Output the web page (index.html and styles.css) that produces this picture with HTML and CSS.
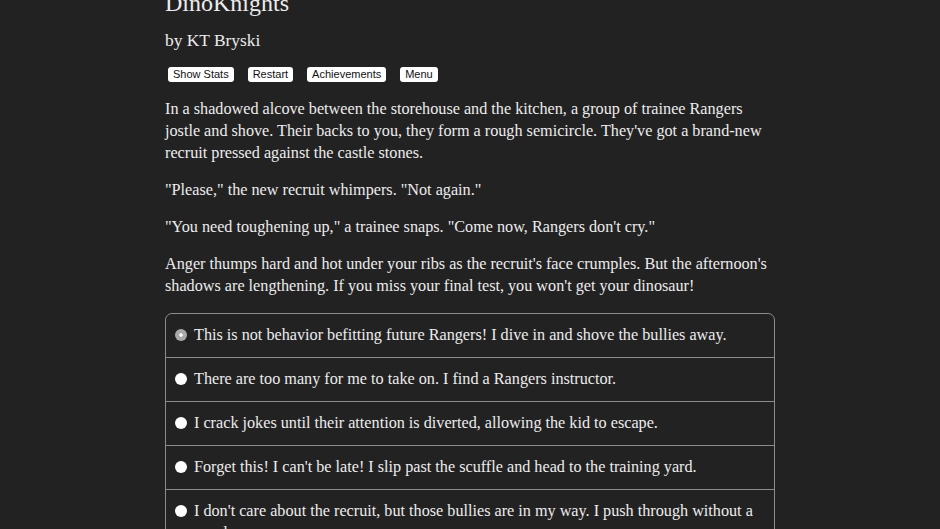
FILE: index.html
```html
<!DOCTYPE html>
<html>
<head>
<meta charset="utf-8">
<link rel="stylesheet" href="styles.css">
</head>
<body>
<div class="page">
  <h1 class="title">DinoKnights</h1>
  <h2 class="author">by KT Bryski</h2>
  <div class="buttons">
    <button class="btn">Show Stats</button>
    <button class="btn">Restart</button>
    <button class="btn">Achievements</button>
    <button class="btn">Menu</button>
  </div>
  <div class="text">
    <p>In a shadowed alcove between the storehouse and the kitchen, a group of trainee Rangers jostle and shove. Their backs to you, they form a rough semicircle. They've got a brand-new recruit pressed against the castle stones.</p>
    <p>"Please," the new recruit whimpers. "Not again."</p>
    <p>"You need toughening up," a trainee snaps. "Come now, Rangers don't cry."</p>
    <p>Anger thumps hard and hot under your ribs as the recruit's face crumples. But the afternoon's shadows are lengthening. If you miss your final test, you won't get your dinosaur!</p>
  </div>
  <div class="choices">
    <div class="choice"><span class="radio checked"></span><span class="label">This is not behavior befitting future Rangers! I dive in and shove the bullies away.</span></div>
    <div class="choice"><span class="radio"></span><span class="label">There are too many for me to take on. I find a Rangers instructor.</span></div>
    <div class="choice"><span class="radio"></span><span class="label">I crack jokes until their attention is diverted, allowing the kid to escape.</span></div>
    <div class="choice"><span class="radio"></span><span class="label">Forget this! I can't be late! I slip past the scuffle and head to the training yard.</span></div>
    <div class="choice"><span class="radio"></span><span class="label">I don't care about the recruit, but those bullies are in my way. I push through without a word.</span></div>
  </div>
</div>
</body>
</html>
```
FILE: styles.css
```css
html, body {
  margin: 0;
  padding: 0;
  background: #222222;
}
body {
  color: #ececec;
  font-family: "Liberation Serif", "Times New Roman", serif;
  overflow: hidden;
}
.page {
  width: 610px;
  margin: -12px auto 0;
}
.title {
  font-size: 24px;
  font-weight: normal;
  line-height: 30px;
  margin: 0 0 10px;
}
.author {
  font-size: 17.4px;
  font-weight: normal;
  line-height: 24px;
  margin: 0 0 15px;
}
.buttons {
  display: flex;
  gap: 14px;
  padding-left: 3px;
  margin-bottom: 16px;
}
.btn {
  font-family: "Liberation Sans", Arial, sans-serif;
  font-size: 11px;
  line-height: 13px;
  padding: 1px 5px;
  background: #ffffff;
  color: #111;
  border: none;
  border-radius: 3px;
}
.text p {
  font-size: 16.2px;
  line-height: 22px;
  margin: 0 0 15px;
}
.choices {
  border: 1px solid #8c8c8c;
  border-radius: 7px;
  margin-top: 16px;
}
.choice {
  display: flex;
  align-items: flex-start;
  gap: 7px;
  padding: 10px 9px 11px;
  font-size: 16.2px;
  line-height: 22px;
  border-top: 1px solid #8c8c8c;
}
.choice:first-child {
  border-top: none;
}
.radio {
  flex: none;
  width: 12px;
  height: 12px;
  border-radius: 50%;
  background: #ffffff;
  margin-top: 5px;
}
.radio.checked {
  background: radial-gradient(circle, #f4f4f4 0 1.5px, #a9a9a9 2px 100%);
}
```
